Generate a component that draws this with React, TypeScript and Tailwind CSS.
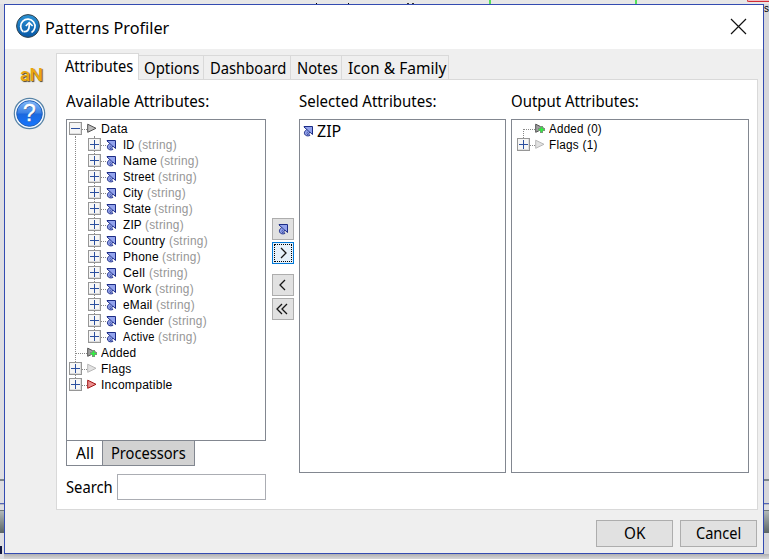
import React from "react";

const tree = "font-['Liberation_Sans',Arial,sans-serif] text-[12px] leading-4 tracking-[0.25px]";
const attributes: [string, number][] = [["ID", 12], ["Name", 34], ["Street", 32], ["City", 20.5], ["State", 28], ["ZIP", 18.5], ["Country", 42.5], ["Phone", 36], ["Cell", 22.5], ["Work", 28.5], ["eMail", 29.5], ["Gender", 41.5], ["Active", 31.5]];

function Label({ text, width, className = "", small = false }: { text: string; width: number; className?: string; small?: boolean }) {
  const ref = React.useRef<HTMLSpanElement>(null);
  const [scale, setScale] = React.useState(1);
  React.useLayoutEffect(() => {
    if (ref.current) setScale(width / ref.current.offsetWidth);
  }, [width]);
  return (
    <span className={(small ? "block h-4 shrink-0 whitespace-nowrap text-left leading-4 " : "block h-6 shrink-0 whitespace-nowrap text-left leading-6 ") + className} style={{ width }}>
      <span ref={ref} className="inline-block origin-left" style={{ transform: `scaleX(${scale})` }}>{text}</span>
    </span>
  );
}

function Expander({ open = false }: { open?: boolean }) {
  return (
    <svg className="relative top-[-0.5px] shrink-0" width="13" height="13" shapeRendering="crispEdges">
      <rect x=".5" y=".5" width="12" height="12" fill="#f6f6f6" stroke="#969696" />
      <path d="M1 11.5H12M11.5 1V12" stroke="#dedede" />
      <path d="M2 6.5H11" stroke="#2b4f9f" />
      {!open && <path d="M6.5 2V11" stroke="#2b4f9f" />}
    </svg>
  );
}

function AttributeIcon() {
  return (
    <svg className="shrink-0" width="11" height="12" viewBox="0 0 11 12">
      <path d="M1 1.5H9.5V9.5L7 7.2C5.6 7.8 5.6 9 6.8 10.5C3.9 11.6 1.3 10.2 1.4 7.8C1.5 6.2 2.8 5.6 3.7 4.4L1 2Z" fill="#93a3ec" stroke="#1c2c86" strokeWidth="1" strokeLinejoin="miter" />
      <path d="M3.7 4.4L7 7.4M3.5 8.2L4.7 7.1M4 9.6L5 9" stroke="#25368b" strokeWidth=".9" fill="none" />
    </svg>
  );
}

function Arrow({ kind = "gray" }: { kind?: "gray" | "light" | "red" | "added" }) {
  const fill = kind === "red" ? "#ec8f8f" : kind === "light" ? "#e2e2e2" : kind === "added" ? "#a0a0a0" : "#bdbdbd";
  const stroke = kind === "red" ? "#a01414" : kind === "light" ? "#b8b8b8" : "#505050";
  return (
    <svg className="block shrink-0 overflow-visible" width="11" height="11" viewBox="0 0 11 11">
      <path d="M.7 1.2L9 5.3L.7 9.3Z" fill={fill} stroke={stroke} />
      {kind === "added" && (
        <g>
          <rect x="5" y="3" width="3" height="7" fill="#7d8f7d" />
          <rect x="3" y="5" width="7" height="3" fill="#7d8f7d" />
          <rect x="5.8" y="4" width="1.4" height="5.2" fill="#2bf53c" />
          <rect x="3.9" y="5.9" width="5.2" height="1.4" fill="#2bf53c" />
        </g>
      )}
    </svg>
  );
}

function Root({ text, kind = "gray", leaf = false, open = false, width }: { text: string; kind?: "gray" | "light" | "red" | "added"; leaf?: boolean; open?: boolean; width: number }) {
  return (
    <div className="relative flex h-4 items-center pl-[2px]">
      {leaf ? <span className="ml-[6px] w-3 border-t border-dotted border-[#888]" /> : <><Expander open={open} /><span className="w-[5px] border-t border-dotted border-[#888]" /></>}
      <span className="relative top-[-0.5px] shrink-0"><Arrow kind={kind} /></span>
      <Label small text={text} width={width} className={"ml-[3px] " + tree} />
    </div>
  );
}

function MoveButton({ children, active = false }: { children: React.ReactNode; active?: boolean }) {
  return (
    <button className={active ? "flex h-[22px] w-[22px] border border-[#0078d7] bg-[#e5f1fb] p-px" : "flex h-[22px] w-[22px] items-center justify-center border border-[#adadad] bg-[#e1e1e1]"}>
      {active ? <span className="flex h-full w-full items-center justify-center border border-dotted border-black">{children}</span> : children}
    </button>
  );
}

function Chevron({ direction }: { direction: "right" | "left" | "double" }) {
  const path = direction === "right" ? "M4 1L9 6L4 11" : direction === "left" ? "M8 1L3 6L8 11" : "M5 1L0 6L5 11M10 1L5 6L10 11";
  return <svg className="shrink-0 overflow-visible" width="12" height="12"><path d={path} fill="none" stroke="#161616" strokeWidth="1.3" /></svg>;
}

function Edge({ right = false }: { right?: boolean }) {
  return (
    <div className={"relative h-full shrink-0 overflow-hidden " + (right ? "w-[5px] bg-[#d7d7da]" : "w-1 bg-[#dedee2]")}>
      <div className="h-[479px]" />
      <div className="h-[2px] bg-[#7c858a]" />
      <div className="h-[22px]" />
      <div className="h-px bg-[#5365b5]" />
      <div className="h-px bg-[#b8bac3]" />
      <div className="h-[5px] bg-[#dedee1]" />
      <div className="h-px bg-[#6e7779]" />
      <div className="h-[22px] bg-linear-to-b from-[#b2b9b9] to-[#5c6666]" />
      {!right && <div className="mt-[13px] h-[8px] w-[2px] bg-[#101640]" />}
    </div>
  );
}

export default function App() {
  return (
    <div className="relative flex h-[559px] w-[769px] flex-col overflow-hidden bg-[#d6d6d8] font-['Noto_Sans',sans-serif] text-[16px] text-black">
      <div className="absolute inset-0 flex justify-between"><Edge /><Edge right /></div>
      <div className="absolute inset-x-0 top-0 h-1 bg-[#e7e7e7]">
        <div className="absolute left-[316px] top-[3px] h-px w-px bg-black" />
        <div className="absolute left-[348px] top-[3px] h-px w-px bg-black" />
        <div className="absolute left-[407px] top-[3px] h-px w-[7px] border-x-2 border-[#333]" />
        <div className="absolute left-[489px] h-1 w-[2px] bg-[#55e05a]" />
        <div className="absolute left-[635px] h-1 w-[2px] bg-[#55e05a]" />
        <div className="absolute left-[747px] h-[2px] w-[22px] rounded-bl border-b border-l border-[#d22b35] bg-[#f2bec1]" />
      </div>
      <div className="absolute left-[764px] top-[3px] font-['Liberation_Sans',Arial,sans-serif] text-[10px] leading-3">s</div>
      <div className="absolute bottom-0 left-1 right-0 h-[5px] bg-linear-to-b from-[#b0b0b2] to-[#d7d7d9]" />

      <main className="relative ml-1 mt-1 flex h-[550px] w-[760px] flex-col border border-[#334bb1] bg-[#efefef]">
        <header className="flex h-[44px] shrink-0 items-center justify-between bg-white pl-[10px] pr-4">
          <div className="flex items-center">
            <svg className="relative -top-px" width="26" height="26" viewBox="0 0 26 26">
              <defs><linearGradient id="logo" x2="0" y2="1"><stop stopColor="#2c94d6" /><stop offset="1" stopColor="#0757a5" /></linearGradient></defs>
              <circle cx="13" cy="13" r="11.4" fill="url(#logo)" stroke="#34434d" />
              <path d="M8.2 18.8A7.2 7.2 0 1 1 16.5 19.5" fill="none" stroke="white" strokeWidth="1.7" />
              <path d="M8.5 18.5C12 18.9 14.2 17.2 14.2 13V11" fill="none" stroke="white" strokeWidth="1.8" />
              <path d="M10.8 13L14.2 9.6L17.6 13" fill="none" stroke="white" strokeWidth="1.6" />
            </svg>
            <Label text="Patterns Profiler" width={124} className="ml-1 mt-[2px] text-[17px]" />
          </div>
          <svg className="relative -top-px" width="17" height="17"><path d="M1 1L16 16M16 1L1 16" stroke="#111" strokeWidth="1.2" /></svg>
        </header>

        <div className="flex h-[461px] shrink-0">
          <aside className="flex w-[51px] flex-col pt-[12px]">
            <span className="ml-[15px] h-6 text-[19px] font-medium leading-7 tracking-[-0.8px] text-[#eba80f] [text-shadow:1px_1px_1px_#4d4228] font-['Roboto',sans-serif]">aN</span>
            <svg className="ml-[7.5px] mt-[11.5px]" width="33" height="33" viewBox="0 0 33 33">
              <defs><linearGradient id="help" x2="0" y2="1"><stop stopColor="#83b9f7" /><stop offset=".48" stopColor="#3b80e5" /><stop offset=".52" stopColor="#1c68de" /><stop offset="1" stopColor="#1475ff" /></linearGradient></defs>
              <circle cx="16.5" cy="16.5" r="15.2" fill="#f3f8ff" stroke="#5783a6" strokeWidth="1.2" />
              <circle cx="16.5" cy="16.5" r="12.8" fill="url(#help)" stroke="#2261b6" />
              <text x="17" y="24.5" textAnchor="middle" fontFamily="Liberation Sans" fontSize="24" fill="#285796">?</text>
              <text x="16.3" y="24" textAnchor="middle" fontFamily="Liberation Sans" fontSize="23" fill="white" stroke="white" strokeWidth=".4">?</text>
            </svg>
          </aside>

          <section className="flex w-[702px] flex-col pt-[4px]">
            <nav className="relative flex h-[27px] items-end">
              <div className="relative z-10 flex h-[27px] w-[83px] items-start border-x border-t border-[#d9d9d9] bg-white pl-[7.5px]"><Label text="Attributes" width={68.5} /></div>
              <div className="flex h-[25px] w-[65px] border-b border-r border-t border-[#d9d9d9] pl-[5px]"><Label text="Options" width={55} /></div>
              <div className="flex h-[25px] w-[87px] border-b border-r border-t border-[#d9d9d9] pl-[5.5px]"><Label text="Dashboard" width={76.5} /></div>
              <div className="flex h-[25px] w-[51px] border-b border-r border-t border-[#d9d9d9] pl-[5.5px]"><Label text="Notes" width={40.5} /></div>
              <div className="flex h-[25px] w-[107px] border-b border-r border-t border-[#d9d9d9] pl-[5.5px]"><Label text="Icon & Family" width={98} /></div>
              <div className="h-px flex-1 bg-[#d9d9d9]" />
            </nav>
            <div className="flex h-[430px] border-x border-b border-[#d9d9d9] bg-white pl-[9px] pt-[9px]">
              <div className="w-[200px]">
                <Label text="Available Attributes:" width={143.5} />
                <div className="relative mt-[6px] h-[322px] border border-[#828790] bg-white pt-px">
                  <div className="absolute left-2 top-4 h-[250px] border-l border-dotted border-[#888]" />
                  <div className="absolute left-[27px] top-4 h-[202px] border-l border-dotted border-[#888]" />
                  <Root text="Data" width={26.5} open />
                  {attributes.map(([name, width]) => (
                    <div className="relative flex h-4 items-center pl-[21px]" key={name}>
                      <Expander />
                      <span className="w-[5px] border-t border-dotted border-[#888]" />
                      <AttributeIcon />
                      <Label small text={name} width={width} className={"ml-[6px] " + tree} />
                      <Label small text="(string)" width={38.5} className={"ml-[3px] text-[#969696] " + tree} />
                    </div>
                  ))}
                  <Root text="Added" width={35.5} kind="added" leaf />
                  <Root text="Flags" width={31} kind="light" />
                  <Root text="Incompatible" width={71.5} kind="red" />
                </div>
                <div className="-mt-px flex h-[26px] w-[129px] border border-[#828790]">
                  <div className="w-[36px] border-r border-[#828790] pl-[9px]"><Label text="All" width={17.5} /></div>
                  <div className="flex-1 bg-[#d2d2d2] pl-[8px]"><Label text="Processors" width={75} /></div>
                </div>
                <div className="mt-[8px] flex items-center">
                  <Label text="Search" width={47} />
                  <input className="ml-1 h-[26px] w-[149px] border border-[#abadb3] bg-white outline-none" aria-label="Search" />
                </div>
              </div>
              <div className="ml-[6px] flex w-[22px] flex-col pt-[129px]">
                <MoveButton><AttributeIcon /></MoveButton>
                <div className="mt-[2px]"><MoveButton active><Chevron direction="right" /></MoveButton></div>
                <div className="mt-[10px]"><MoveButton><Chevron direction="left" /></MoveButton></div>
                <div className="mt-[2px]"><MoveButton><Chevron direction="double" /></MoveButton></div>
              </div>
              <div className="ml-[5px] w-[207px]">
                <Label text="Selected Attributes:" width={137} />
                <div className="mt-[6px] h-[354px] border border-[#828790] pl-[3px]">
                  <div className="flex h-[22px] items-center"><AttributeIcon /><Label text="ZIP" width={24} className="ml-[3px]" /></div>
                </div>
              </div>
              <div className="ml-[5px] w-[238px]">
                <Label text="Output Attributes:" width={128} />
                <div className="relative mt-[6px] h-[354px] border border-[#828790] pl-[3px] pt-px">
                  <div className="absolute left-[11px] top-[9px] h-[15px] border-l border-dotted border-[#888]" />
                  <Root text="Added (0)" width={53} kind="added" leaf />
                  <Root text="Flags (1)" width={49} kind="light" />
                </div>
              </div>
            </div>
          </section>
        </div>

        <footer className="flex justify-end gap-[7px] pr-[6px] pt-[10px]">
          <button className="flex h-[27px] w-[77px] justify-center border border-[#adadad] bg-[#e1e1e1]"><Label text="OK" width={21} /></button>
          <button className="flex h-[27px] w-[77px] justify-center border border-[#adadad] bg-[#e1e1e1]"><Label text="Cancel" width={45.5} /></button>
        </footer>
      </main>
    </div>
  );
}
